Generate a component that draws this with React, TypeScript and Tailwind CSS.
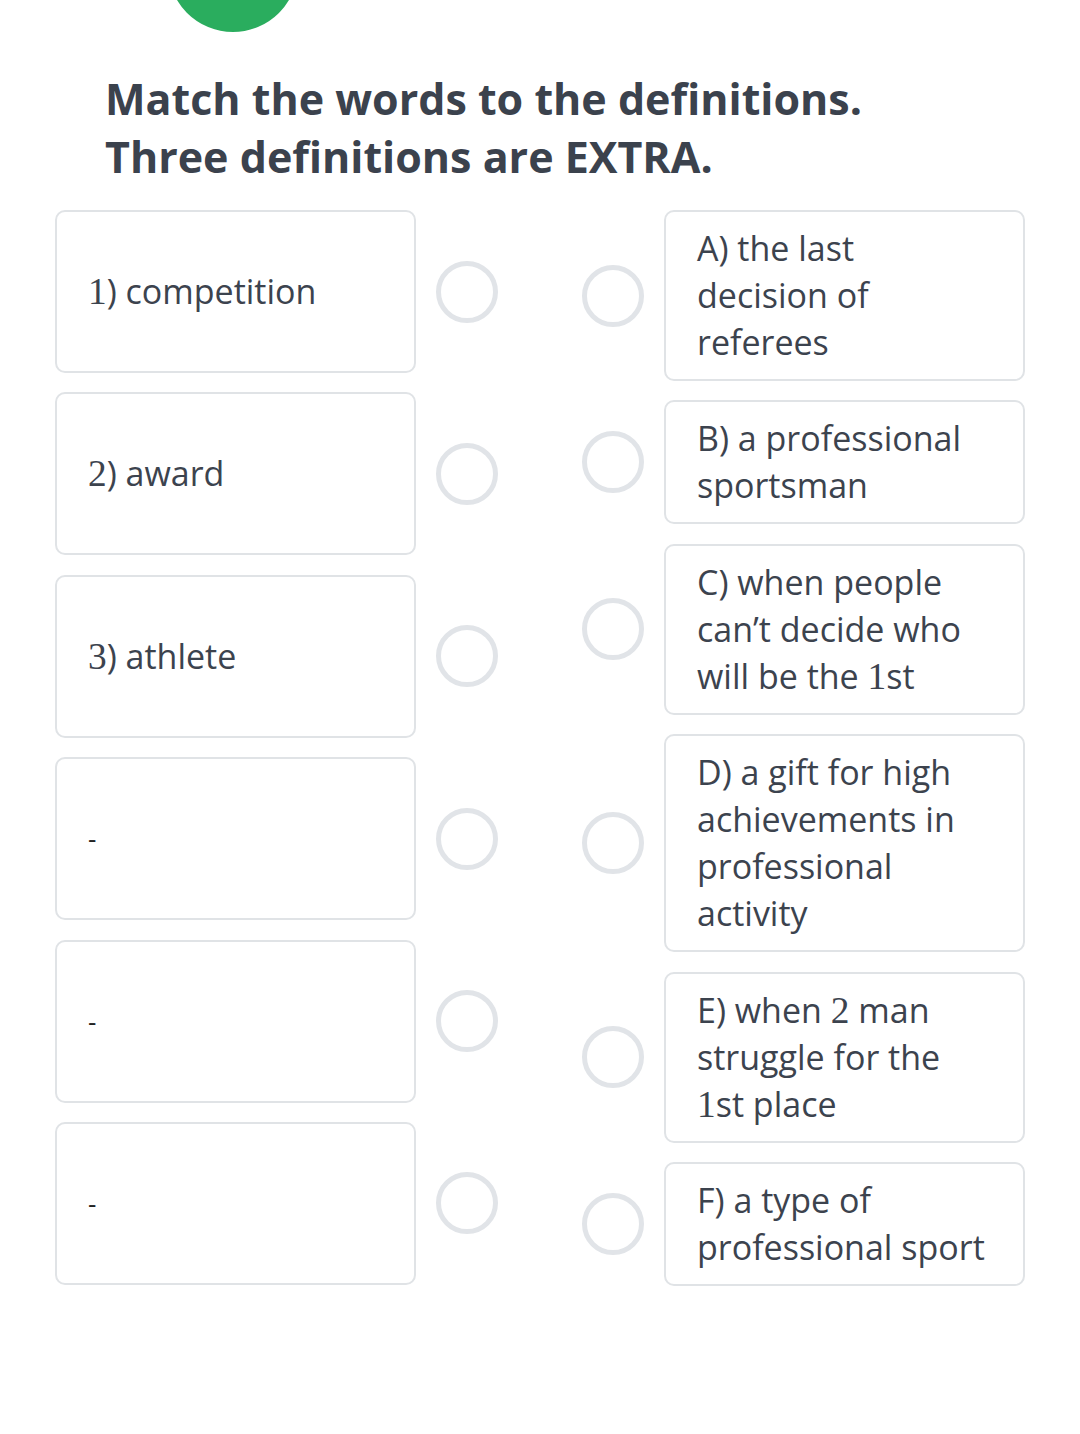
import React from "react";

const font = { fontFamily: '"Open Sans", "Noto Sans", sans-serif' };

function T({ s }: { s: string }) {
  const parts = s.split(/(\d+)/);
  return (
    <>
      {parts.map((p, i) =>
        /^\d+$/.test(p) ? (
          <span key={i} className="font-['Liberation_Serif',serif] text-[1.1em] leading-none">
            {p}
          </span>
        ) : (
          <React.Fragment key={i}>{p}</React.Fragment>
        )
      )}
    </>
  );
}

function Ring() {
  return (
    <div className="w-[62px] h-[62px] shrink-0 rounded-full border-[5px] border-[#e1e4e8] bg-white" />
  );
}

const left = ["1) competition", "2) award", "3) athlete", "-", "-", "-"];
const right = [
  ["A) the last", "decision of", "referees"],
  ["B) a professional", "sportsman"],
  ["C) when people", "can’t decide who", "will be the 1st"],
  ["D) a gift for high", "achievements in", "professional", "activity"],
  ["E) when 2 man", "struggle for the", "1st place"],
  ["F) a type of", "professional sport"],
];

export default function App() {
  return (
    <div className="relative w-[1080px] h-[1434px] bg-white overflow-hidden text-[#3c434e]" style={font}>
      <div className="absolute left-[168px] top-[-98px] w-[130px] h-[130px] rounded-full bg-[#2aad5e]" />
      <div className="pt-[70px] pl-[105px]">
        <h1 className="text-[43px] leading-[58px] font-bold text-[#3b424d]">
          Match the words to the definitions.
          <br />
          Three definitions are EXTRA.
        </h1>
      </div>
      <div className="flex pl-[55px] pt-[24px] gap-[84px]">
        <div className="flex flex-col gap-[19.4px]">
          {left.map((t, i) => (
            <div key={i} className="flex items-center gap-[20px]">
              <div className="w-[361px] h-[163px] rounded-[10px] border-2 border-[#e0e3e6] flex items-center pl-[31px] text-[34px]">
                {t === "-" ? (
                  <span className="text-[#222] text-[26px]">-</span>
                ) : (
                  <T s={t} />
                )}
              </div>
              <Ring />
            </div>
          ))}
        </div>
        <div className="flex flex-col gap-[19.4px]">
          {right.map((lines, i) => (
            <div key={i} className="flex items-center gap-[20px]">
              <Ring />
              <div className="w-[361px] rounded-[10px] border-2 border-[#e0e3e6] px-[31px] py-[13px] text-[34px] leading-[47px]">
                {lines.map((l, j) => (
                  <div key={j}>
                    <T s={l} />
                  </div>
                ))}
              </div>
            </div>
          ))}
        </div>
      </div>
    </div>
  );
}
